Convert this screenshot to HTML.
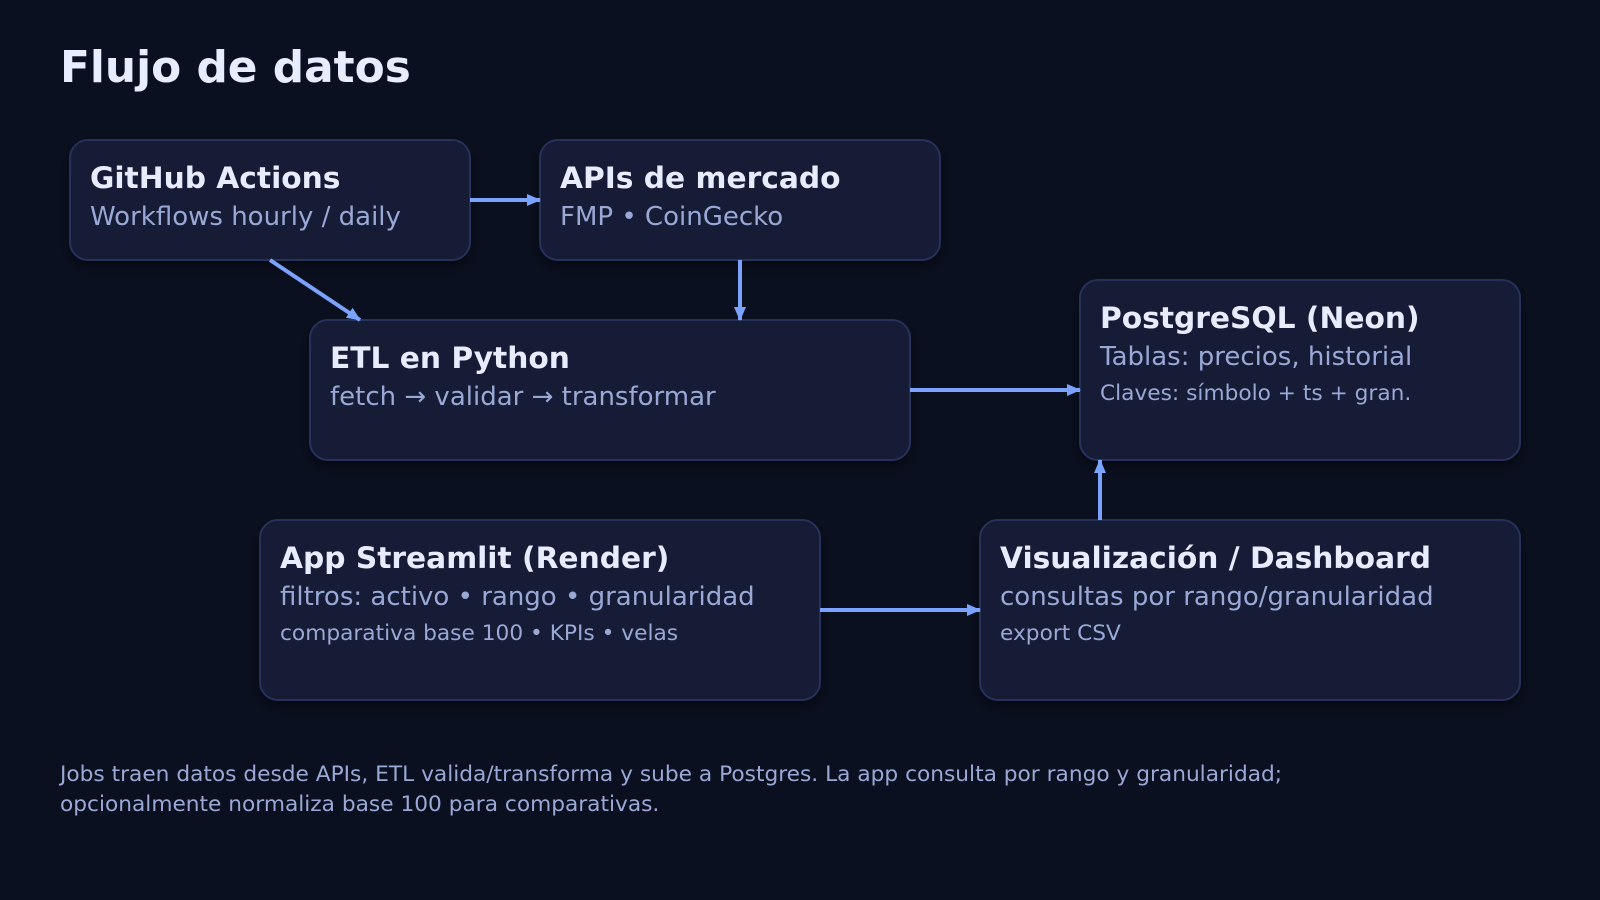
<!DOCTYPE html>
<html><head><meta charset="utf-8"><style>
html,body{margin:0;padding:0;background:#0b1020;}
svg{display:block}
text{font-family:"DejaVu Sans","Liberation Sans",sans-serif}
.t{fill:#e8ecff;font-weight:bold;font-size:29.7px}
.s{fill:#9aa8d6;font-size:26px}
.x{fill:#9aa8d6;font-size:21.7px}
.b{fill:#121a35;stroke:#25315a;stroke-width:2;filter:url(#sh)}
.a{stroke:#7aa2ff;stroke-width:4;fill:none;marker-end:url(#ar)}
</style></head><body>
<svg width="1600" height="900" viewBox="0 0 1600 900" xmlns="http://www.w3.org/2000/svg">
<defs>
<filter id="sh" x="-10%" y="-10%" width="130%" height="140%"><feDropShadow dx="0" dy="6" stdDeviation="6" flood-color="#000" flood-opacity="0.45"/></filter>
<marker id="ar" markerWidth="14" markerHeight="14" refX="13" refY="6" orient="auto" markerUnits="userSpaceOnUse"><path d="M0,0 L14,6 L0,12 Z" fill="#7aa2ff"/></marker>
</defs>
<rect width="1600" height="900" fill="#0b1020"/>
<text x="60" y="82" fill="#e8ecff" font-weight="bold" font-size="43.8">Flujo de datos</text>

<rect class="b" x="70" y="140" width="400" height="120" rx="18"/>
<text class="t" x="90" y="188">GitHub Actions</text>
<text class="s" x="90" y="225">Workflows hourly / daily</text>

<rect class="b" x="540" y="140" width="400" height="120" rx="18"/>
<text class="t" x="560" y="188">APIs de mercado</text>
<text class="s" x="560" y="225">FMP • CoinGecko</text>

<rect class="b" x="310" y="320" width="600" height="140" rx="18"/>
<text class="t" x="330" y="368">ETL en Python</text>
<text class="s" x="330" y="405">fetch → validar → transformar</text>

<rect class="b" x="1080" y="280" width="440" height="180" rx="18"/>
<text class="t" x="1100" y="328">PostgreSQL (Neon)</text>
<text class="s" x="1100" y="365">Tablas: precios, historial</text>
<text class="x" x="1100" y="400">Claves: símbolo + ts + gran.</text>

<rect class="b" x="260" y="520" width="560" height="180" rx="18"/>
<text class="t" x="280" y="568">App Streamlit (Render)</text>
<text class="s" x="280" y="605">filtros: activo • rango • granularidad</text>
<text class="x" x="280" y="640">comparativa base 100 • KPIs • velas</text>

<rect class="b" x="980" y="520" width="540" height="180" rx="18"/>
<text class="t" x="1000" y="568">Visualización / Dashboard</text>
<text class="s" x="1000" y="605">consultas por rango/granularidad</text>
<text class="x" x="1000" y="640">export CSV</text>

<line class="a" x1="470" y1="200" x2="540" y2="200"/>
<line class="a" x1="270" y1="260" x2="360" y2="320"/>
<line class="a" x1="740" y1="260" x2="740" y2="320"/>
<line class="a" x1="910" y1="390" x2="1080" y2="390"/>
<line class="a" x1="1100" y1="520" x2="1100" y2="460"/>
<line class="a" x1="820" y1="610" x2="980" y2="610"/>

<text class="x" x="60" y="781">Jobs traen datos desde APIs, ETL valida/transforma y sube a Postgres. La app consulta por rango y granularidad;</text>
<text class="x" x="60" y="811">opcionalmente normaliza base 100 para comparativas.</text>
</svg>
</body></html>
